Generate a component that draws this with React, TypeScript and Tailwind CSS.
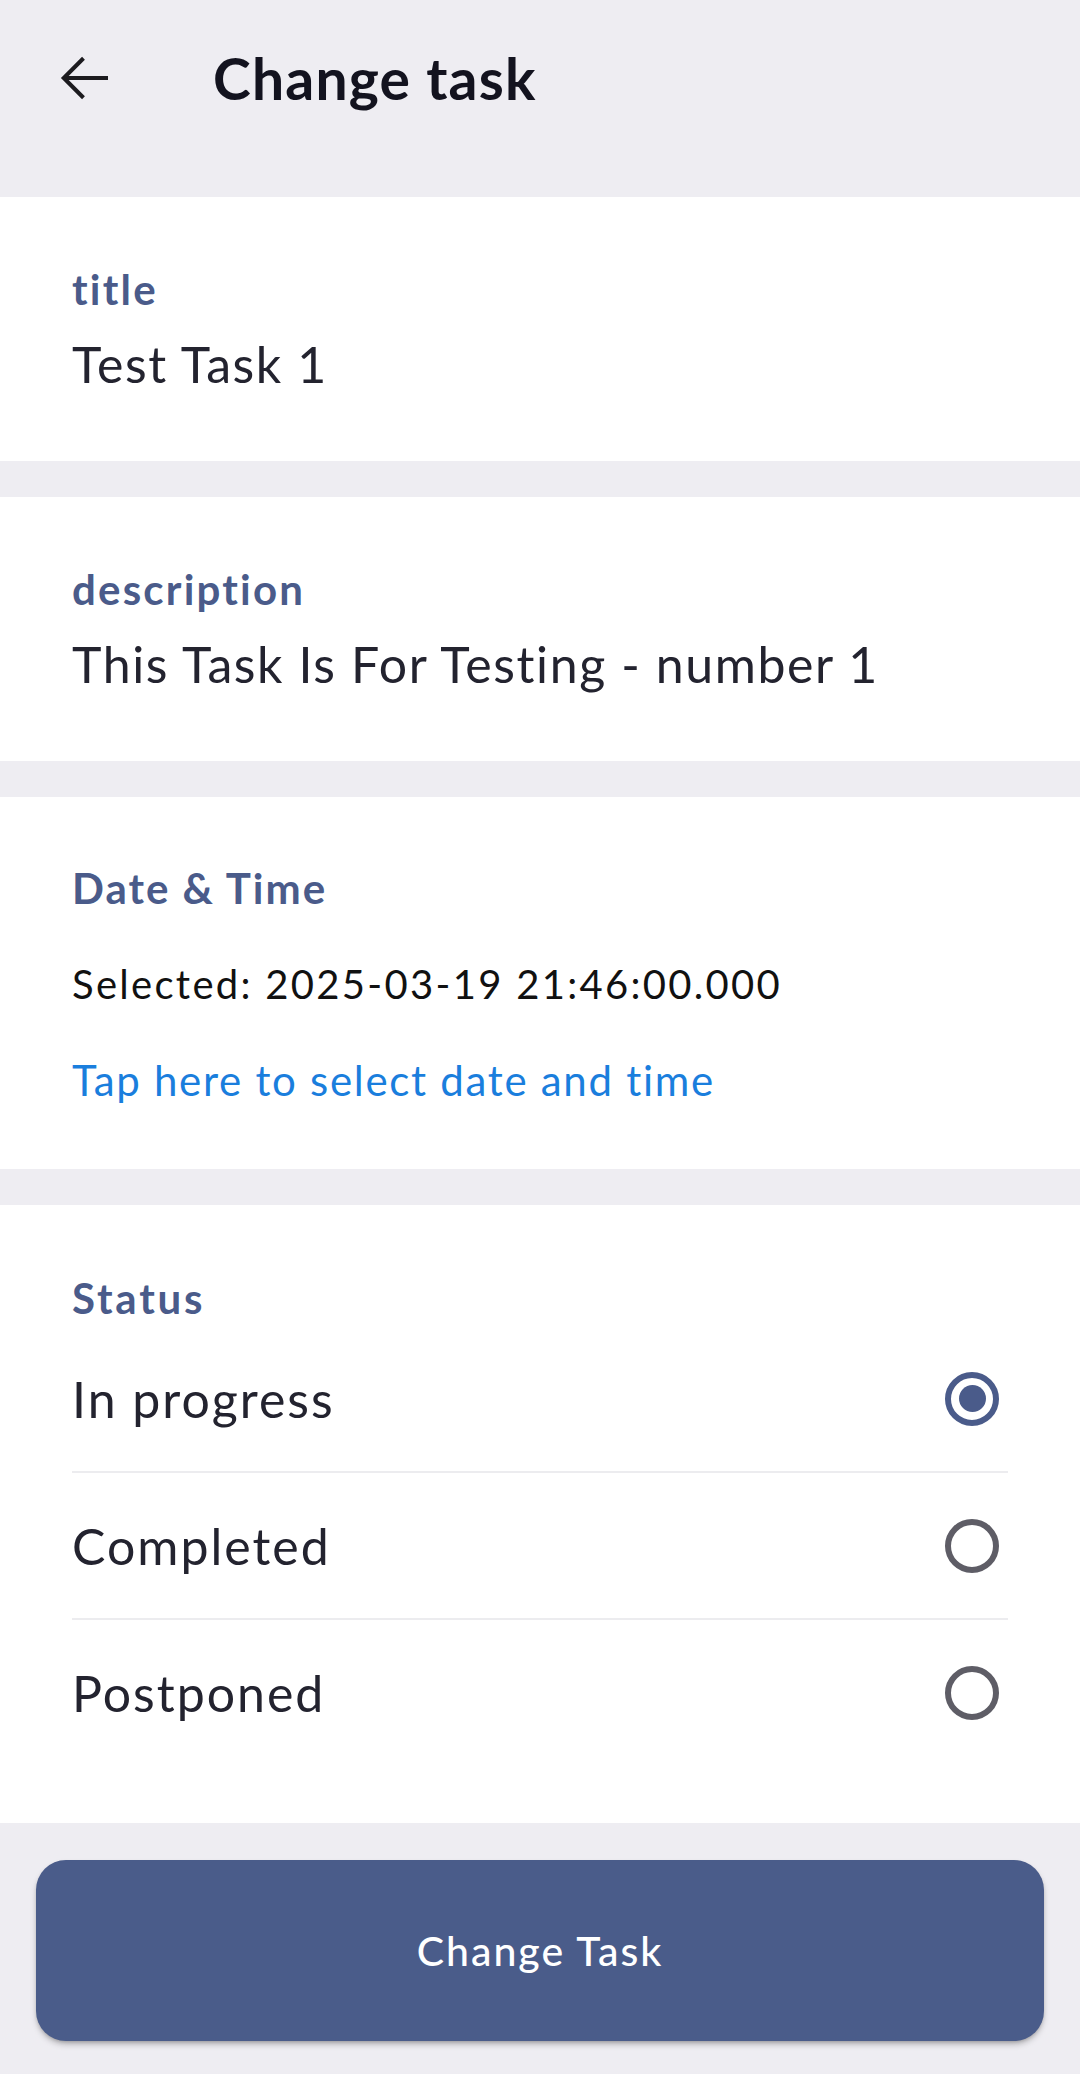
import React, { useState } from 'react'

const statuses = ['In progress', 'Completed', 'Postponed']

function Field({ label, value }: { label: string; value: string }) {
  return (
    <section className="bg-white px-[72px] pt-[67px] pb-[67px]">
      <div className="text-[42px] leading-[50px] font-bold tracking-[2.2px] text-[#4a5b8a]">{label}</div>
      <div className="mt-[20px] text-[50px] leading-[60px] tracking-[1.6px] text-[#23232f]">{value}</div>
    </section>
  )
}

function Radio({ checked }: { checked: boolean }) {
  return (
    <div
      className={
        checked
          ? 'w-[54px] h-[54px] rounded-full border-[6px] border-[#4a5b8a] flex items-center justify-center'
          : 'w-[54px] h-[54px] rounded-full border-[6px] border-[#5e5d66]'
      }
    >
      {checked && <div className="w-[27px] h-[27px] rounded-full bg-[#4a5b8a]" />}
    </div>
  )
}

export default function App() {
  const [status, setStatus] = useState('In progress')

  return (
    <div className="w-[1080px] h-[2074px] bg-[#eeedf2] flex flex-col" style={{ fontFamily: 'Lato, "Open Sans", sans-serif' }}>
      <header className="h-[197px]">
        <div className="h-[156px] flex items-center pl-[48px]">
          <svg width="72" height="72" viewBox="0 0 24 24" fill="#1c1b1f">
            <path d="M20 11.3H6.9l5.4-5.4-0.95-0.95L4.3 12l7.05 7.05 0.95-0.95-5.4-5.4H20z" />
          </svg>
          <h1 className="ml-[93px] text-[57px] leading-[68px] font-bold tracking-[1.2px] text-[#13131f]">Change task</h1>
        </div>
      </header>

      <div className="flex flex-col gap-[36px]">
        <Field label="title" value="Test Task 1" />
        <Field label="description" value="This Task Is For Testing - number 1" />

        <section className="bg-white px-[72px] pt-[66px] pb-[64px]">
          <div className="text-[42px] leading-[50px] font-bold tracking-[2px] text-[#4a5b8a]">Date &amp; Time</div>
          <div className="mt-[47px] text-[40px] leading-[48px] tracking-[2.3px] text-[#111111]">Selected: 2025-03-19 21:46:00.000</div>
          <div className="mt-[47px] text-[42px] leading-[50px] tracking-[1.7px] text-[#1a7edd]">Tap here to select date and time</div>
        </section>

        <section className="bg-white px-[72px] pt-[68px] pb-[58px]">
          <div className="text-[42px] leading-[50px] font-bold tracking-[2.8px] text-[#4a5b8a]">Status</div>
          <div className="mt-[3px] w-[936px]">
            {statuses.map((s, i) => (
              <div key={s}>
                {i > 0 && <div className="h-[2px] bg-[#ececef]" />}
                <button
                  onClick={() => setStatus(s)}
                  className="w-full h-[145px] flex items-center justify-between pr-[9px] text-left"
                >
                  <span className="text-[50px] leading-[60px] tracking-[2px] text-[#23232f]">{s}</span>
                  <Radio checked={status === s} />
                </button>
              </div>
            ))}
          </div>
        </section>
      </div>

      <div className="px-[36px] pt-[37px]">
        <button className="w-full h-[181px] rounded-[30px] bg-[#4a5c8a] shadow-md shadow-black/25 text-white text-[41px] font-medium tracking-[2px]">
          Change Task
        </button>
      </div>
    </div>
  )
}
